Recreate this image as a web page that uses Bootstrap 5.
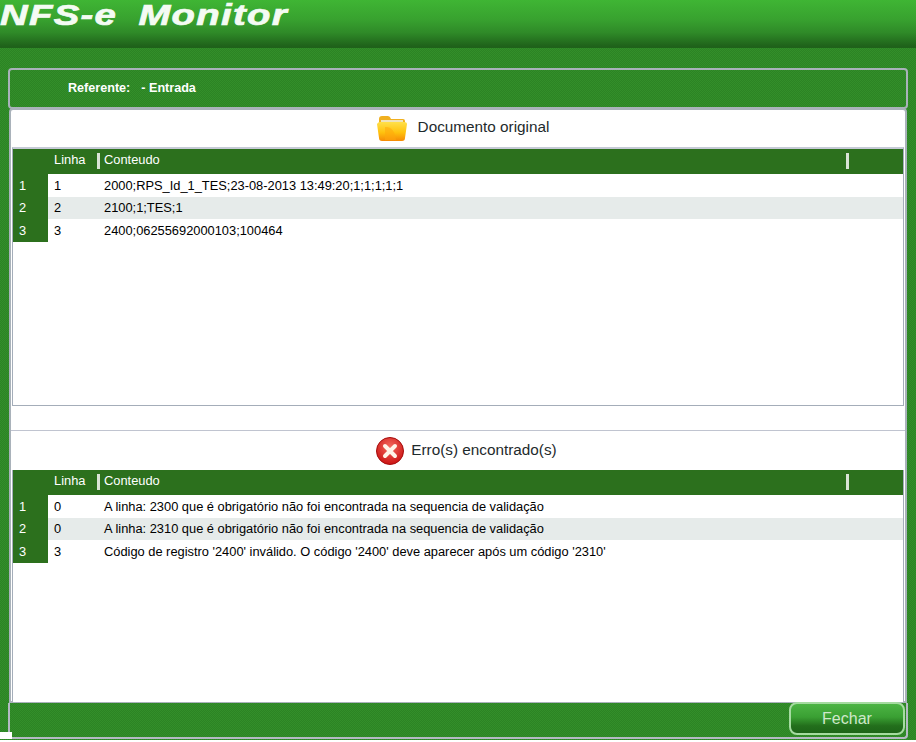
<!DOCTYPE html>
<html lang="pt"><head><meta charset="utf-8"><title>NFS-e Monitor</title>
<link href="https://cdn.jsdelivr.net/npm/bootstrap@5.3.0/dist/css/bootstrap.min.css" rel="stylesheet">
<style>
html{height:742px;overflow:hidden;background:#fff}
body{height:740px;overflow:hidden;font-family:"Liberation Sans",Arial,sans-serif;font-size:12px;color:#000;background:#2f8a26 repeating-conic-gradient(#2c8324 0 25%,#338f2a 0 50%) 0 0/2px 2px}
.top-band{height:48px;background:linear-gradient(#3fb534 0,#38a22f 40%,#2f8a28 68%,#1f621a 96%);overflow:hidden}
.brand{display:inline-block;color:#f4fbf3;font-weight:700;font-style:italic;font-size:29px;line-height:34px;letter-spacing:1px;word-spacing:7px;transform:scaleX(1.32);transform-origin:0 0;white-space:nowrap;margin-top:-2px;-webkit-text-stroke:.7px #f4fbf3}
.shell{padding:20px 8px 0 8px}
.ref-panel{height:41px;border:2px solid #a9b2ba;border-radius:4px;color:#fff;font-weight:700;font-size:12.6px;padding-left:58px;padding-bottom:1px}
.ref-panel span+span{margin-left:11px}
.page-frame{margin:-1px 1px 0;border:2px solid #a9b2ba;border-radius:4px 4px 0 0;background:#fff;height:595px}
.head-bar{height:37px;font-size:15.3px;color:#1e2a2c;padding-bottom:2px;padding-left:10px}
.head-bar svg{margin-right:11px}
.grid-frame{border:1px solid #a4adb9;border-top:2px solid #c6cad6;margin:0 1px;background:#fff}
.grid-a{height:259px}
.grid-b{height:232px;border-bottom:0;border-top:0}
.gap-line{height:25px;border-bottom:1px solid #c0c4d0}
.head-bar-b{height:39px;padding-bottom:0;padding-left:17px}
.head-bar-b svg{margin-right:7px}
.data-tbl{width:100%;table-layout:fixed;margin:0;border-collapse:collapse;font-size:12.85px}
.data-tbl th,.data-tbl td{padding:0;font-weight:400;vertical-align:middle;white-space:nowrap}
.data-tbl thead th{height:25px;background:#2c701d;color:#fff;padding-bottom:4px}
.data-tbl .num-col{width:35px;background:#2c701d;color:#fff;padding-left:6px}
.data-tbl .line-col{width:50px;padding-left:6px}
.data-tbl .text-col{padding-left:6px}
.data-tbl tbody tr{height:22.5px}
.data-tbl tbody tr:nth-child(2) td:not(.num-col){background:#e6ebea}
.data-tbl thead th.cell-bar{position:relative;padding-left:6px}
.cell-bar::before{content:"";position:absolute;left:-1px;top:4px;width:3px;height:16px;background:#d9e4d5}
.end-col{width:56px}
.foot-wrap{position:relative;height:36px;border:2px solid #b4bac4;border-top:0;border-radius:0 0 4px 0;padding-right:1px}
.foot-wrap::before{content:"";position:absolute;left:-10px;bottom:-2px;width:12px;height:7px;background:#fff}
.close-btn{width:116px;height:33px;border:2px solid #a5dba0;border-radius:8px;background:linear-gradient(#4cb444 0,#3aa033 45%,#236f1c 75%,#1d6418 100%);color:#cfe8cb;font-size:16px;line-height:1;padding:0;margin-top:-1px}
.close-btn:hover{color:#fff}
</style></head>
<body>
<div class="top-band"><div class="brand">NFS-e Monitor</div></div>
<div class="shell">
 <div class="ref-panel d-flex align-items-center"><span>Referente:</span><span>- Entrada</span></div>
 <div class="page-frame">
  <div class="head-bar d-flex align-items-center justify-content-center">
   <svg width="30" height="26" viewBox="0 0 30 26"><defs><linearGradient id="fg" x1="0" y1="0" x2="0" y2="1"><stop offset="0" stop-color="#ffe04a"/><stop offset=".55" stop-color="#ffc20e"/><stop offset="1" stop-color="#f68a06"/></linearGradient></defs><path d="M2 4q0-3 3-3h6q2 0 3 3h12q2 0 2 2v5H2z" fill="#f0b020"/><path d="M4 5h22v5H4z" fill="#efe3bd"/><path d="M0 9q1-2 3-2h24q3 0 3 2l-2 14q0 3-3 3H5q-3 0-3-3z" fill="url(#fg)"/><path d="M8 25V12q9-1 11 13z" fill="#ffa70d" opacity=".55"/></svg>
   <span>Documento original</span>
  </div>
  <div class="grid-frame grid-a">
   <table class="data-tbl"><thead><tr><th class="num-col"></th><th class="line-col">Linha</th><th class="cell-bar">Conteudo</th><th class="cell-bar end-col"></th></tr></thead>
   <tbody>
    <tr><td class="num-col">1</td><td class="line-col">1</td><td class="text-col" colspan="2">2000;RPS_Id_1_TES;23-08-2013 13:49:20;1;1;1;1;1</td></tr>
    <tr><td class="num-col">2</td><td class="line-col">2</td><td class="text-col" colspan="2">2100;1;TES;1</td></tr>
    <tr><td class="num-col">3</td><td class="line-col">3</td><td class="text-col" colspan="2">2400;06255692000103;100464</td></tr>
   </tbody></table>
  </div>
  <div class="gap-line"></div>
  <div class="head-bar head-bar-b d-flex align-items-center justify-content-center">
   <svg width="28" height="28" viewBox="0 0 28 28"><defs><radialGradient id="rg" cx=".5" cy=".35" r=".7"><stop offset="0" stop-color="#f46a5e"/><stop offset="1" stop-color="#c80c0c"/></radialGradient></defs><circle cx="14" cy="14" r="13.5" fill="url(#rg)" stroke="#a50d0d"/><path d="M9 9l10 10M19 9L9 19" stroke="#fff4e8" stroke-width="4" stroke-linecap="round"/></svg>
   <span>Erro(s) encontrado(s)</span>
  </div>
  <div class="grid-frame grid-b">
   <table class="data-tbl"><thead><tr><th class="num-col"></th><th class="line-col">Linha</th><th class="cell-bar">Conteudo</th><th class="cell-bar end-col"></th></tr></thead>
   <tbody>
    <tr><td class="num-col">1</td><td class="line-col">0</td><td class="text-col" colspan="2">A linha: 2300 que é obrigatório não foi encontrada na sequencia de validação</td></tr>
    <tr><td class="num-col">2</td><td class="line-col">0</td><td class="text-col" colspan="2">A linha: 2310 que é obrigatório não foi encontrada na sequencia de validação</td></tr>
    <tr><td class="num-col">3</td><td class="line-col">3</td><td class="text-col" colspan="2">Código de registro '2400' inválido. O código '2400' deve aparecer após um código '2310'</td></tr>
   </tbody></table>
  </div>
 </div>
 <div class="foot-wrap d-flex justify-content-end align-items-start"><button type="button" class="btn close-btn">Fechar</button></div>
</div>
</body></html>
